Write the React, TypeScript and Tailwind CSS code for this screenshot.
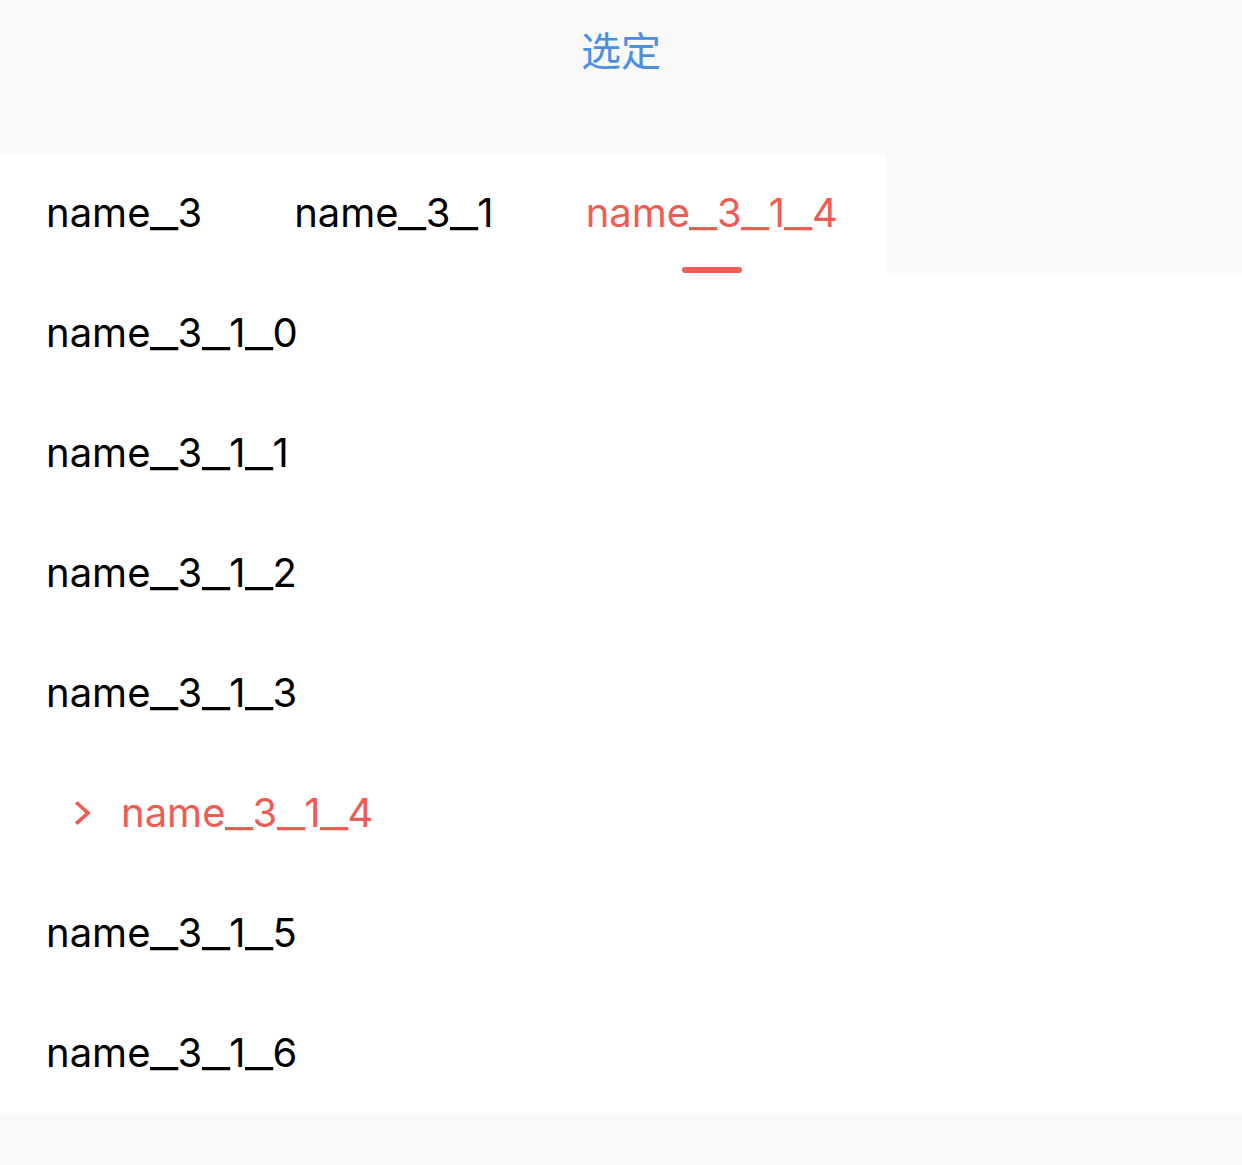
const tabs = ["name_3", "name_3_1", "name_3_1_4"];
const items = [
  "name_3_1_0",
  "name_3_1_1",
  "name_3_1_2",
  "name_3_1_3",
  "name_3_1_4",
  "name_3_1_5",
  "name_3_1_6",
];
const active = "name_3_1_4";

// the reference font has wide underscores, Inter's are narrow
function Label({ text }: { text: string }) {
  const parts = text.split("_");
  return (
    <span className="whitespace-nowrap">
      {parts.map((p, i) => (
        <span key={i}>
          {i > 0 && (
            <span className="inline-block w-[27px] text-center">
              <span className="inline-block scale-x-[1.55]">_</span>
            </span>
          )}
          {p}
        </span>
      ))}
    </span>
  );
}

export default function App() {
  return (
    <div
      className="min-h-screen bg-[#f9f9f9]"
      style={{ fontFamily: '"Inter", "Noto Sans CJK SC", sans-serif' }}
    >
      {/* HEADER */}
      <div className="h-[154px] flex justify-center pt-[26px]">
        <button className="text-[40px] leading-[52px] text-[#4a90e2] h-fit">选定</button>
      </div>

      {/* TABS */}
      <div className="flex h-[119px]">
        <div className="flex bg-white pr-[2px]">
          {tabs.map((t, i) => {
            const on = i === tabs.length - 1;
            return (
              <div
                key={t}
                className={`relative px-[46px] flex items-center text-[40px] ${
                  on ? "text-[#ee5c53]" : "text-black"
                }`}
              >
                <span className="-mt-[2px]">
                  <Label text={t} />
                </span>
                {on && (
                  <span className="absolute bottom-0 left-1/2 -translate-x-1/2 w-[60px] h-[6px] rounded-full bg-[#ee5c53]" />
                )}
              </div>
            );
          })}
        </div>
      </div>

      {/* LIST */}
      <div className="bg-white">
        {items.map((it) => {
          const on = it === active;
          return (
            <div
              key={it}
              className={`h-[120px] flex items-center text-[40px] ${
                on ? "pl-[74px] text-[#ee5c53]" : "pl-[46px] text-black"
              }`}
            >
              {on && (
                <svg width="18" height="24" viewBox="0 0 18 24" className="mr-[29px]">
                  <path
                    d="M3.5 2.5 L14 12 L3.5 21.5"
                    fill="none"
                    stroke="#ee5c53"
                    strokeWidth="3.6"
                    strokeLinecap="square"
                    strokeLinejoin="miter"
                  />
                </svg>
              )}
              <Label text={it} />
            </div>
          );
        })}
      </div>
      <div className="h-[52px]" />
    </div>
  );
}
